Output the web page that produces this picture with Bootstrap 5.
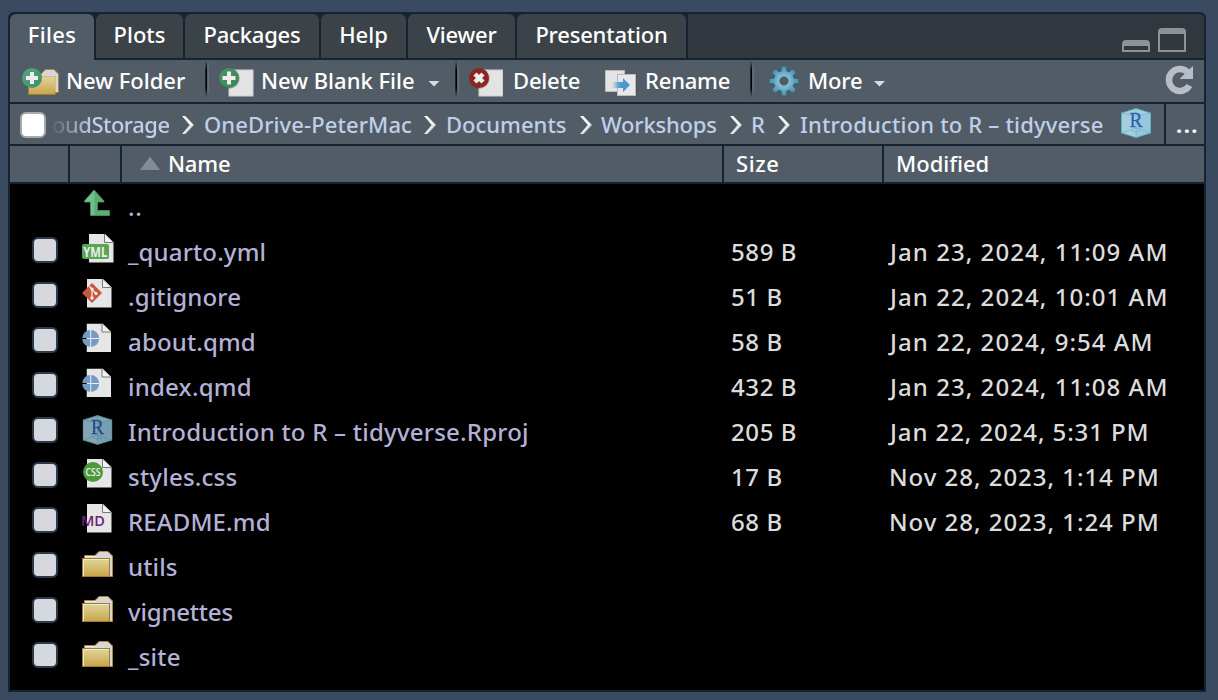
<!DOCTYPE html>
<html lang="en">
<head>
<meta charset="utf-8">
<meta name="viewport" content="width=device-width, initial-scale=1">
<title>Files</title>
<link href="https://cdn.jsdelivr.net/npm/bootstrap@5.3.0/dist/css/bootstrap.min.css" rel="stylesheet">
<style>
body{background:#3a4b61;font-family:"Noto Sans","Open Sans",sans-serif;font-size:22px;font-weight:500;line-height:30px;color:#fff;height:700px;overflow:hidden;padding:12px 12px 8px 8px}
svg{display:block;flex:none}
.pane{height:680px;border:2px solid #152332;border-radius:6px 6px 0 0;background:#000;overflow:hidden;white-space:nowrap}
.tabstrip{height:46px;background:#30373e;border-bottom:2px solid #152332;padding-right:18px}
.tabstrip .nav-link{height:44px;padding:5px 0 0;text-align:center;color:#fff;background:#3b4349;border:0;border-radius:6px 6px 0 0;font-weight:500}
.tabstrip .nav-item{border-right:2px solid #152332;background:#152332}
.tabstrip .nav-link.active{height:46px;background:#525c66;border-radius:6px 6px 0 0}
.w-files{width:86px}.w-plots{width:89px}.w-pack{width:136px}.w-help{width:87px}.w-view{width:109px}.w-pres{width:171px}
.toolbar{height:44px;background:#525c66;border-bottom:2px solid #152332;display:grid;grid-template-columns:195px 4px 246px 4px 137px 154px 4px 1fr 40px;align-items:center}
.tool{height:42px;padding:0;border:0;background:none;color:#fff;display:flex;align-items:center;font-weight:500}
.tool span{padding:0 0 2px 1px}
.divider{width:4px;height:36px;margin-bottom:4px;background:linear-gradient(90deg,#525c66 0,#000 20%,#000 45%,#525c66 55%,#707982 80%,#525c66);-webkit-mask-image:linear-gradient(transparent,#000 25%,#000 75%,transparent)}
.pathbar{height:42px;background:#525c66;border-bottom:2px solid #152332;display:grid;grid-template-columns:42px 129px 23px 219px 23px 133px 22px 128px 22px 26px 23px 321px 43px 1fr;align-items:center;color:#c0cfe8}
.pathbar a{color:inherit;text-decoration:none}
.pathbar svg{margin-top:2px}
.pathbar .proj{margin:-3px 0 0}
.faded{-webkit-mask-image:linear-gradient(90deg,rgba(0,0,0,.05),#000 40px);letter-spacing:-.5px}
.more-path{border-left:2px solid #152332;height:40px;color:#fff;font-weight:700;letter-spacing:1.5px;padding:5px 0 0 10px}
.box{appearance:none;width:26px;height:26px;border:2px solid #2c3b4b;border-radius:6px;background:#d5d8dd;display:block;margin:0}
.box-all{background:#fff;border-color:#a9a9ab;margin:1px 0 0 10px}
.head,.file-row{display:grid;grid-template-columns:60px 52px 602px 160px 1fr}
.head{height:38px;background:#525c66;border-bottom:2px solid #152332}
.head>div{border-right:2px solid #152332;padding-top:2px}
.head>div:last-child{border:0}
.file-row{height:45px;font-size:24px;line-height:45px;color:#dcdcdc}
.file-row .box{margin:8px 0 0 22px}
.file-row svg{margin-left:10px}
.fname{padding-left:6px;color:#b4b1d6;letter-spacing:.15px}
.fname.long{letter-spacing:.23px}
.fsize{padding-left:7px;letter-spacing:.6px}
.fdate{padding-left:6px;letter-spacing:1.05px}
.fdate.nov{padding-left:5px;letter-spacing:.97px}
.fdate.pm{letter-spacing:.9px}
.ls5{letter-spacing:.3px}.lsn{letter-spacing:-.2px}.ls6{letter-spacing:.6px}.ls1{letter-spacing:.1px}.ls2{letter-spacing:.18px}
</style>
</head>
<body>
<svg width="0" height="0" class="position-absolute">
<defs>
<linearGradient id="fold" x2="0" y2="1"><stop stop-color="#e0d59c"/><stop offset="1" stop-color="#c9a54a"/></linearGradient>
<linearGradient id="grn" x2="1" y2="1"><stop stop-color="#55a883"/><stop offset="1" stop-color="#3f8d64"/></linearGradient>
<linearGradient id="grn2" x2="1" y2="1"><stop stop-color="#45976a"/><stop offset="1" stop-color="#3c8350"/></linearGradient>
<radialGradient id="gear"><stop stop-color="#a9d8e8"/><stop offset=".5" stop-color="#72b4cb"/><stop offset="1" stop-color="#4489a5"/></radialGradient>
<linearGradient id="blue"><stop stop-color="#4a98cf" stop-opacity="0"/><stop offset=".45" stop-color="#4a98cf"/></linearGradient>
<linearGradient id="up"><stop stop-color="#79c795"/><stop offset=".38" stop-color="#6dbd8a"/><stop offset=".42" stop-color="#5bab74"/><stop offset="1" stop-color="#5dae77"/></linearGradient>
<symbol id="page" viewBox="0 0 25 29"><path d="M0 0H16L24.500 8.500V28.500H0Z" fill="#e6e6e6"/><path d="M15.500 0V8.500H24.500Z" fill="#f3f3f3"/><path d="M15.500 0V8.500H24.500" fill="none" stroke="#777" stroke-width="1"/><path d="M15.500 0L24.500 8.500" stroke="#aaa" stroke-width=".7"/></symbol>
<symbol id="folder" viewBox="0 0 34 45"><path d="M4.500 33V11.500H15L19 7.500H28L32.500 12V32.500H28" fill="#d6d7d6" stroke="#a8883a"/><path d="M5 12.500H15.500" stroke="#eee"/><rect x="2.500" y="14.500" width="27" height="18" fill="url(#fold)" stroke="#9c7d30"/><path d="M3.500 32V15.500H29" fill="none" stroke="#f3ebc4"/></symbol>
<symbol id="cube" viewBox="0 0 30 30"><path d="M15 .500L29.500 5V25L15 29.500L.500 25V5Z" fill="#a4cfe1"/><path d="M15 8L29.500 5V25L15 29.500Z" fill="#98c6de"/><path d="M.500 5L15 8L29.500 5M.500 25L15 20L29.500 25M10 22Q15 26 20 22M15 0V29" fill="none" stroke="#6dbccb" stroke-width=".8"/><path d="M15 .500L29.500 5V25L15 29.500L.500 25V5Z" fill="none" stroke="#5fb0c0" stroke-width=".8"/><text x="15" y="19" font-family="Liberation Serif" font-size="21" fill="#2f5fae" stroke="#2f5fae" stroke-width=".3" text-anchor="middle" font-weight="400" textLength="13" lengthAdjust="spacingAndGlyphs">R</text></symbol>
<symbol id="chev" viewBox="0 0 14 20"><path d="M1 1H4.500L13 10L4.500 19H1L8.500 10Z" fill="#d0d1d3"/><path d="M1.500 1H3.500L12 10H9.500Z" fill="#fff"/><path d="M2 19L10 10.500" stroke="#fff" stroke-width="1"/></symbol>
<symbol id="qmd" viewBox="0 0 34 45"><use href="#page" x="6.500" y="4.500" width="25" height="29"/><circle cx="10.700" cy="19.500" r="8.500" fill="#769bc3"/><path d="M10.700 11V28M6.500 19.500H19.200" stroke="#eee" stroke-width="1"/><path d="M2 19.500H6.500" stroke="#000"/></symbol>
</defs>
</svg>

<main class="pane">
  <div class="tabstrip d-flex">
    <ul class="nav flex-nowrap flex-grow-1">
      <li class="nav-item w-files"><a class="nav-link active ls5">Files</a></li>
      <li class="nav-item w-plots"><a class="nav-link">Plots</a></li>
      <li class="nav-item w-pack"><a class="nav-link lsn">Packages</a></li>
      <li class="nav-item w-help"><a class="nav-link">Help</a></li>
      <li class="nav-item w-view"><a class="nav-link lsn">Viewer</a></li>
      <li class="nav-item w-pres"><a class="nav-link lsn">Presentation</a></li>
    </ul>
    <svg width="64" height="44" viewBox="1122 14 64 44" fill="#8b9394"><path d="M1122 52V44Q1122 40 1126 40H1146Q1150 40 1150 44V52ZM1124 46V50H1148V46Z" fill-rule="evenodd"/><path d="M1158 52V32Q1158 28 1162 28H1182Q1186 28 1186 32V52ZM1160 34V50H1184V34Z" fill-rule="evenodd"/></svg>
  </div>

  <div class="toolbar">
    <button class="tool"><svg class="ms-2" width="47" height="42" viewBox="18 60 47 42"><path d="M41 94.500V74L45.500 69.500H54L58.500 74V92.500H55" fill="#d6d7d6" stroke="#a8883a"/><rect x="28.500" y="76.500" width="27" height="18" fill="url(#fold)" stroke="#9c7d30"/><path d="M42 76.500H55.500V92" fill="none" stroke="#f3ebc4" stroke-width=".6"/><circle cx="32" cy="78" r="10" fill="url(#grn)"/><path d="M32 72V84M26 78H38" stroke="#eee" stroke-width="4"/></svg><span>New Folder</span></button>
    <div class="divider"></div>
    <button class="tool"><svg width="51" height="42" viewBox="209 60 51 42"><rect x="229" y="70" width="24" height="26" fill="#e3e3e4" stroke="#cfcfd2"/><circle cx="229.500" cy="78.500" r="10.200" fill="#333" opacity=".3"/><circle cx="229" cy="78" r="10" fill="url(#grn2)"/><path d="M229 71.500V84.500M222.500 78H235.500" stroke="#eee" stroke-width="4"/></svg><span>New Blank File</span><svg class="ms-auto" width="27" height="42" viewBox="428 60 27 42"><path d="M428.500 81H439.500L434 86.500Z" fill="#d9dadb"/></svg></button>
    <div class="divider"></div>
    <button class="tool"><svg width="53" height="42" viewBox="459 60 53 42"><rect x="479" y="70" width="23.500" height="26" fill="#e3e3e4" stroke="#cfcfd2"/><circle cx="479.500" cy="78.500" r="10.200" fill="#333" opacity=".3"/><circle cx="479" cy="78" r="10" fill="#8d251f"/><path d="M475 74L483 82M483 74L475 82" stroke="#eee" stroke-width="4.500"/></svg><span class="lsn">Delete</span></button>
    <button class="tool"><svg width="48" height="42" viewBox="596 60 48 42"><rect x="605.500" y="70.500" width="19" height="21" fill="#e3e3e4" stroke="#bbb"/><rect x="618" y="75" width="19" height="21" fill="#444" opacity=".4"/><rect x="617.500" y="74.500" width="18" height="21" fill="#e8e8e9" stroke="#bcbcc0"/><path d="M612 82H623V78L630 85L623 92V88H612Z" fill="url(#blue)"/></svg><span class="lsn">Rename</span></button>
    <div class="divider"></div>
    <button class="tool"><svg width="53" height="42" viewBox="754 60 53 42"><path id="gearp" fill="url(#gear)" stroke="#27536b" stroke-width=".6" fill-rule="evenodd" d=""/></svg><span class="lsn">More</span><svg class="ms-2" width="17" height="42" viewBox="869 60 17 42"><path d="M873 81H884L878.500 86.500Z" fill="#d9dadb"/></svg></button>
    <svg width="40" height="42" viewBox="1164 60 40 42"><path d="M1189.500 85.500A11 11 0 1 1 1187.500 72" fill="none" stroke="#b9bdc8" stroke-width="6.500"/><path d="M1193 66V79H1179.500L1183.500 75L1189 69.500Z" fill="#b9bdc8"/></svg>
  </div>

  <div class="pathbar">
    <input class="box box-all" type="checkbox" aria-label="Select all">
    <a class="faded">oudStorage</a><svg width="14" height="20"><use href="#chev"/></svg>
    <a class="ls1">OneDrive-PeterMac</a><svg width="14" height="20"><use href="#chev"/></svg>
    <a>Documents</a><svg width="14" height="20"><use href="#chev"/></svg>
    <a class="lsn">Workshops</a><svg width="14" height="20"><use href="#chev"/></svg>
    <a>R</a><svg width="14" height="20"><use href="#chev"/></svg>
    <a class="ls2">Introduction to R – tidyverse</a><svg width="30" height="30" class="proj"><use href="#cube"/></svg>
    <div class="more-path">...</div>
  </div>

  <div class="head">
    <div></div><div></div>
    <div class="d-flex"><svg width="46" height="34" viewBox="122 148 46 34"><path d="M140 170L150 156.500L160 170Z" fill="#828b96"/></svg><span class="lsn">Name</span></div>
    <div class="ls6 ps-2"><span class="ms-1">Size</span></div>
    <div class="ps-2"><span class="ms-1">Modified</span></div>
  </div>

  <div class="file-row"><span></span><svg width="34" height="45"><path d="M14 6L24 17V18H17.500V26.500H29.500V31.500H10.500V18H4.500V17Z" fill="url(#up)" stroke="#4d9467" stroke-width=".8"/></svg><span class="fname ls6">..</span></div>
  <div class="file-row"><input class="box" type="checkbox"><svg width="34" height="45"><use href="#page" x="9" y="5" width="25" height="29"/><rect x="2" y="15" width="27" height="15" rx="2" fill="#55a754"/><text x="15.300" y="27.500" font-family="Open Sans" font-weight="700" font-size="14.500" textLength="24" lengthAdjust="spacingAndGlyphs" text-anchor="middle" fill="#eee">YML</text></svg><span class="fname">_quarto.yml</span><span class="fsize">589 B</span><span class="fdate">Jan 23, 2024, 11:09 AM</span></div>
  <div class="file-row"><input class="box" type="checkbox"><svg width="34" height="45"><use href="#page" x="7" y="5" width="25" height="29"/><path d="M12 9L22 19L12 29L2 19Z" fill="#c8573c"/><path d="M9 12L12 15V24M12 15.500L16 19.500" stroke="#eee" stroke-width="1.200" fill="none"/><g fill="#eee"><circle cx="12" cy="15" r="1.600"/><circle cx="12" cy="24" r="1.700"/><circle cx="16" cy="19.500" r="1.600"/></g></svg><span class="fname">.gitignore</span><span class="fsize">51 B</span><span class="fdate">Jan 22, 2024, 10:01 AM</span></div>
  <div class="file-row"><input class="box" type="checkbox"><svg width="34" height="45"><use href="#qmd"/></svg><span class="fname">about.qmd</span><span class="fsize">58 B</span><span class="fdate">Jan 22, 2024, 9:54 AM</span></div>
  <div class="file-row"><input class="box" type="checkbox"><svg width="34" height="45"><use href="#qmd"/></svg><span class="fname long">index.qmd</span><span class="fsize">432 B</span><span class="fdate">Jan 23, 2024, 11:08 AM</span></div>
  <div class="file-row"><input class="box" type="checkbox"><svg width="34" height="45"><use href="#cube" x="2.500" y="6" width="30" height="30" opacity=".8"/></svg><span class="fname long">Introduction to R – tidyverse.Rproj</span><span class="fsize">205 B</span><span class="fdate pm">Jan 22, 2024, 5:31 PM</span></div>
  <div class="file-row"><input class="box" type="checkbox"><svg width="34" height="45"><use href="#page" x="7" y="5" width="25" height="29"/><circle cx="13" cy="18" r="10" fill="#4a9a3c"/><text x="13" y="21.500" font-family="Open Sans" font-weight="600" font-size="10" textLength="15" lengthAdjust="spacingAndGlyphs" text-anchor="middle" fill="#eee">CSS</text></svg><span class="fname long">styles.css</span><span class="fsize">17 B</span><span class="fdate nov">Nov 28, 2023, 1:14 PM</span></div>
  <div class="file-row"><input class="box" type="checkbox"><svg width="34" height="45"><use href="#page" x="7" y="5" width="25" height="29"/><text x="1" y="27" font-family="Open Sans" font-weight="600" font-size="14" textLength="24" lengthAdjust="spacingAndGlyphs" fill="#6c2077">MD</text></svg><span class="fname">README.md</span><span class="fsize">68 B</span><span class="fdate nov">Nov 28, 2023, 1:24 PM</span></div>
  <div class="file-row"><input class="box" type="checkbox"><svg width="34" height="45"><use href="#folder"/></svg><span class="fname">utils</span></div>
  <div class="file-row"><input class="box" type="checkbox"><svg width="34" height="45"><use href="#folder"/></svg><span class="fname lsn">vignettes</span></div>
  <div class="file-row"><input class="box" type="checkbox"><svg width="34" height="45"><use href="#folder"/></svg><span class="fname long">_site</span></div>
</main>
<script>
// eight-toothed gear, centred at (784, 81), with a round hole
(() => {
  const pts = [];
  for (let i = 0; i < 8; i++) {
    const a = i * Math.PI / 4 - Math.PI / 2;
    for (const [d, r] of [[-.26, 10.5], [-.19, 14.4], [-.1, 15.2], [.1, 15.2], [.19, 14.4], [.26, 10.5]])
      pts.push((784 + r * Math.cos(a + d)).toFixed(1) + ' ' + (81 + r * Math.sin(a + d)).toFixed(1));
  }
  document.getElementById('gearp').setAttribute('d', 'M' + pts.join('L') + 'ZM779.8 81a4.200 4.200 0 1 0 8.400 0a4.200 4.200 0 1 0 -8.400 0Z');
})();
</script>
<script src="https://cdn.jsdelivr.net/npm/bootstrap@5.3.0/dist/js/bootstrap.bundle.min.js"></script>
</body>
</html>
